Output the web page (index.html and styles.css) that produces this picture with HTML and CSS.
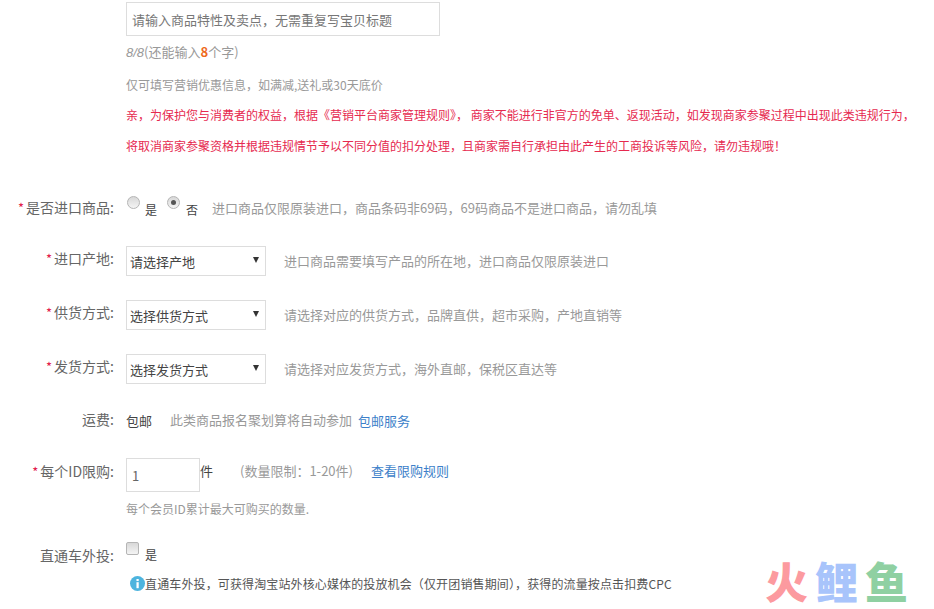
FILE: index.html
```html
<!DOCTYPE html>
<html lang="zh">
<head>
<meta charset="utf-8">
<title>商品报名</title>
<link rel="stylesheet" href="styles.css">
</head>
<body>
<form class="form">
  <div class="top">
    <input class="text-input title-input" type="text" placeholder="请输入商品特性及卖点，无需重复写宝贝标题">
    <p class="count"><i>8/8</i>(还能输入<b>8</b>个字)</p>
    <p class="note">仅可填写营销优惠信息，如满减,送礼或30天底价</p>
    <p class="warn first">亲，为保护您与消费者的权益，根据《营销平台商家管理规则》， 商家不能进行非官方的免单、返现活动，如发现商家参聚过程中出现此类违规行为，</p>
    <p class="warn second">将取消商家参聚资格并根据违规情节予以不同分值的扣分处理，且商家需自行承担由此产生的工商投诉等风险，请勿违规哦！</p>
  </div>

  <div class="row row-import">
    <label class="label"><span class="star">*</span>是否进口商品:</label>
    <div class="field">
      <span class="radio"></span><span class="opt">是</span>
      <span class="radio on"></span><span class="opt">否</span>
      <span class="hint hint-import">进口商品仅限原装进口，商品条码非69码，69码商品不是进口商品，请勿乱填</span>
    </div>
  </div>

  <div class="row row-select first-select">
    <label class="label"><span class="star">*</span>进口产地:</label>
    <div class="field">
      <span class="select">请选择产地<span class="caret"></span></span>
      <span class="hint">进口商品需要填写产品的所在地，进口商品仅限原装进口</span>
    </div>
  </div>

  <div class="row row-select">
    <label class="label"><span class="star">*</span>供货方式:</label>
    <div class="field">
      <span class="select">选择供货方式<span class="caret"></span></span>
      <span class="hint">请选择对应的供货方式，品牌直供，超市采购，产地直销等</span>
    </div>
  </div>

  <div class="row row-select">
    <label class="label"><span class="star">*</span>发货方式:</label>
    <div class="field">
      <span class="select">选择发货方式<span class="caret"></span></span>
      <span class="hint">请选择对应发货方式，海外直邮，保税区直达等</span>
    </div>
  </div>

  <div class="row row-ship">
    <label class="label">运费:</label>
    <div class="field">
      <span class="dark">包邮</span>
      <span class="hint ship-hint">此类商品报名聚划算将自动参加</span>
      <a class="link">包邮服务</a>
    </div>
  </div>

  <div class="row row-limit">
    <label class="label"><span class="star">*</span>每个ID限购:</label>
    <div class="field field-top">
      <input class="text-input qty-input" type="text" value="1">
      <span class="unit">件</span>
      <span class="hint limit-hint">(数量限制：1-20件)</span>
      <a class="link limit-link">查看限购规则</a>
    </div>
  </div>
  <p class="note member">每个会员ID累计最大可购买的数量.</p>

  <div class="row row-through">
    <label class="label">直通车外投:</label>
    <div class="field">
      <span class="checkbox"></span><span class="opt">是</span>
    </div>
  </div>
  <p class="info">
    <svg class="info-icon" viewBox="0 0 16 16" aria-hidden="true">
      <circle cx="8" cy="8" r="8" fill="#4db4de"/>
      <rect x="6.9" y="6.6" width="2.4" height="6.4" fill="#fff"/>
      <rect x="6.9" y="3.2" width="2.4" height="2.2" fill="#fff"/>
    </svg>直通车外投，可获得淘宝站外核心媒体的投放机会（仅开团销售期间），获得的流量按点击扣费CPC
  </p>
</form>
<div class="watermark"><span class="wm-red">火</span><span class="wm-blue">鲤</span><span class="wm-green">鱼</span></div>
</body>
</html>
```
FILE: styles.css
```css
* { box-sizing: border-box; }
html, body { margin: 0; padding: 0; height: 609px; overflow: hidden; background: #fff; }
body {
  font-family: "Noto Sans CJK SC", "Liberation Sans", sans-serif;
  font-size: 13px;
  color: #666;
  position: relative;
}
p { margin: 0; }
.form { padding-top: 2px; white-space: nowrap; }
.top { padding-left: 126px; }
.text-input {
  display: block;
  height: 34px;
  border: 1px solid #ddd;
  background: #fff;
  font: inherit;
  color: #666;
  padding: 0 5px;
  outline: none;
}
.text-input::placeholder { color: #777; opacity: 1; }
.title-input { width: 314px; }
.count { margin-top: 7px; height: 18px; line-height: 18px; font-size: 13px; color: #999; }
.count i { font-style: italic; font-family: "Liberation Sans", sans-serif; }
.count b { color: #ee6a1e; font-size: 13px; font-weight: 700; }
.note { font-size: 12px; line-height: 18px; color: #999; }
.top .note { margin-top: 15px; }
.warn { font-size: 12px; line-height: 18px; color: #e6294f; }
.warn.first { margin-top: 12px; }
.warn.second { margin-top: 13px; }

.row { display: flex; align-items: center; }
.label { width: 114px; margin-right: 12px; text-align: right; color: #666; flex: none; font-size: 14px; position: relative; top: -3px; }
.star { color: #e2184a; margin-right: 2px; font-size: 13px; }
.field { display: flex; align-items: center; flex: none; }
.hint { color: #999; position: relative; top: -1px; }
.dark, .opt, .unit { color: #444; }

.row-import { margin-top: 41px; height: 24px; }
.row-import .label { top: -1px; }
.radio {
  width: 13px; height: 13px; border-radius: 50%;
  border: 1px solid #b5b5b5;
  background: linear-gradient(#d8d8d8, #f4f4f4);
  position: relative; top: -6px;
}
.row-import .field { margin-left: 1px; }
.radio.on::after {
  content: ""; position: absolute; left: 3px; top: 3px;
  width: 5px; height: 5px; border-radius: 50%; background: #555;
}
.opt { margin-left: 5px; font-size: 12px; position: relative; top: 1px; }
.opt + .radio { margin-left: 10px; }
.radio.on + .opt { margin-left: 6px; }
.hint-import { margin-left: 14px; }

.row-select { height: 30px; margin-top: 24px; }
.first-select { margin-top: 26px; }
.select {
  display: flex; align-items: center; justify-content: space-between;
  width: 140px; height: 30px;
  border: 1px solid #ddd; background: #fff;
  padding: 0 6px 0 3px;
  color: #444;
}
.caret {
  width: 0; height: 0; position: relative; top: -1px;
  border-left: 3px solid transparent;
  border-right: 3px solid transparent;
  border-top: 6px solid #333;
}
.row-select .hint { margin-left: 18px; }

.row-ship { margin-top: 26px; height: 20px; }
.row-ship .label { top: -1px; }
.ship-hint { margin-left: 18px; }
.link { color: #3d7fc9; margin-left: 6px; }

.row-limit { margin-top: 28px; height: 34px; align-items: flex-start; }
.row-limit .label { line-height: 26px; top: 0; }
.field-top { align-items: flex-start; line-height: 26px; }
.qty-input { width: 74px; height: 34px; }
.limit-hint { margin-left: 27px; top: 0; }
.limit-link { margin-left: 18px; }
.member { margin: 8px 0 0 126px; }

.row-through { margin-top: 22px; height: 24px; align-items: flex-start; }
.row-through .label { padding-top: 5px; top: 0; }
.checkbox {
  display: block; width: 13px; height: 13px; border-radius: 2px;
  border: 1px solid #b5b5b5;
  background: linear-gradient(#d8d8d8, #f4f4f4);
  margin-top: -1px;
}
.row-through .opt { top: 6px; margin-left: 6px; }
.info { margin: 11px 0 0 130px; display: flex; align-items: center; color: #555; font-size: 12px; letter-spacing: 0.13px; }
.info-icon { width: 15px; height: 15px; flex: none; }

.watermark {
  position: absolute; left: 765px; top: 561px;
  font-family: "Liberation Sans", "Noto Sans CJK SC", sans-serif;
  font-size: 43px; line-height: 46px; font-weight: 900;
  display: flex; gap: 7px; white-space: nowrap;
}
.wm-red { color: #fc9a9f; }
.wm-blue { color: #a8c4fb; }
.wm-green { color: #8fd0a2; }
```
